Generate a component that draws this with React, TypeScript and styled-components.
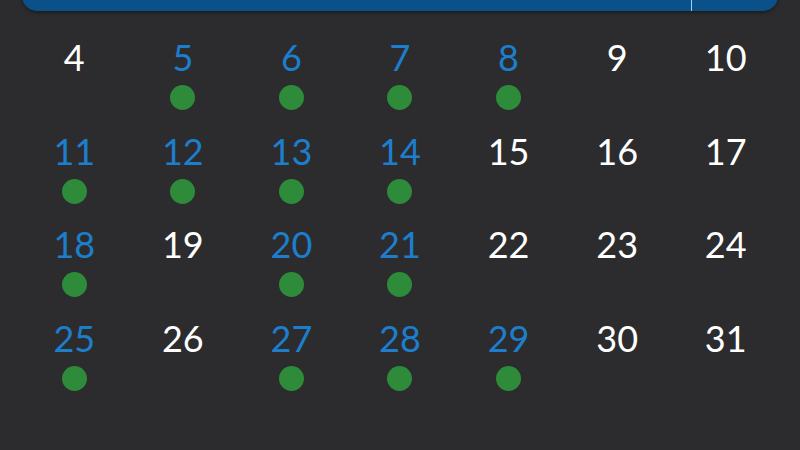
import * as React from "react";
import styled, { createGlobalStyle } from "styled-components";

const GlobalStyle = createGlobalStyle`
  html, body {
    margin: 0;
    padding: 0;
    background-color: #2c2c2e;
    font-family: Lato, "Open Sans", sans-serif;
    overflow: hidden;
  }
`

const Page = styled.div`
  width: 800px;
  height: 450px;
  box-sizing: border-box;
  padding: 0 22px;
  display: flex;
  flex-direction: column;
`

const MonthBar = styled.div`
  height: 40px;
  margin-top: -29px;
  display: flex;
  background-color: #0a5189;
  border-radius: 0 0 15px 15px;
  box-shadow: 0 2px 3px rgba(0, 0, 0, 0.35);
`

const MonthTitle = styled.div`
  flex: 1;
`

const MonthAction = styled.div`
  width: 86px;
  border-left: 1px solid #9fd3ff;
`

const Grid = styled.div`
  margin: 26px -2px 0;
  display: grid;
  grid-template-columns: repeat(7, 1fr);
  grid-auto-rows: 93.6px;
`

const Cell = styled.div`
  display: flex;
  flex-direction: column;
  align-items: center;
`

const DayNumber = styled.div<{ $active: boolean }>`
  font-size: 36px;
  font-weight: 400;
  line-height: 40px;
  color: ${(p) => (p.$active ? "#1c7ecd" : "#ffffff")};
`

const Dot = styled.div`
  margin-top: 8px;
  width: 25px;
  height: 25px;
  border-radius: 50%;
  background-color: #2d8b39;
`

const activeDays = [5, 6, 7, 8, 11, 12, 13, 14, 18, 20, 21, 25, 27, 28, 29]

const days = Array.from({ length: 28 }, (_, i) => i + 4)

export default function App() {
  return (
    <>
      <GlobalStyle />
      <Page>
        <MonthBar>
          <MonthTitle />
          <MonthAction />
        </MonthBar>
        <Grid>
          {days.map((day) => {
            const active = activeDays.includes(day)
            return (
              <Cell key={day}>
                <DayNumber $active={active}>{day}</DayNumber>
                {active && <Dot />}
              </Cell>
            )
          })}
        </Grid>
      </Page>
    </>
  )
}
